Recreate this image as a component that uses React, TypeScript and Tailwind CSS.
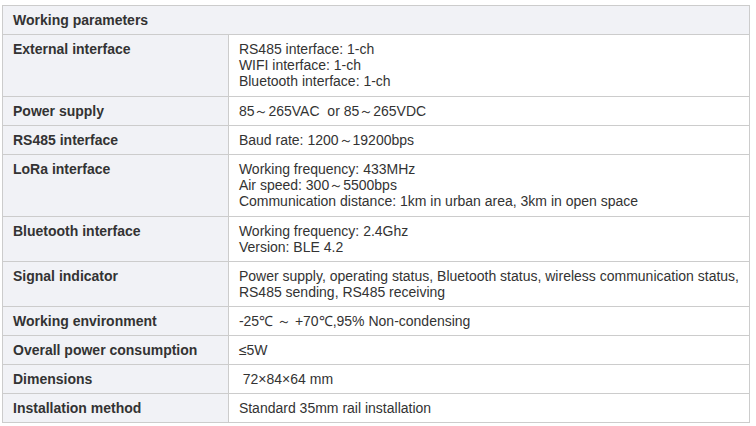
const rows: { label: string; lines: string[] }[] = [
  {
    label: "External interface",
    lines: ["RS485 interface: 1-ch", "WIFI interface: 1-ch", "Bluetooth interface: 1-ch"],
  },
  { label: "Power supply", lines: ["85～265VAC\u00a0 or 85～265VDC"] },
  { label: "RS485 interface", lines: ["Baud rate: 1200～19200bps"] },
  {
    label: "LoRa interface",
    lines: [
      "Working frequency: 433MHz",
      "Air speed: 300～5500bps",
      "Communication distance: 1km in urban area, 3km in open space",
    ],
  },
  { label: "Bluetooth interface", lines: ["Working frequency: 2.4Ghz", "Version: BLE 4.2"] },
  {
    label: "Signal indicator",
    lines: [
      "Power supply, operating status, Bluetooth status, wireless communication status,",
      "RS485 sending, RS485 receiving",
    ],
  },
  { label: "Working environment", lines: ["-25℃ ～ +70℃,95% Non-condensing"] },
  { label: "Overall power consumption", lines: ["≤5W"] },
  { label: "Dimensions", lines: ["\u00a072×84×64 mm"] },
  { label: "Installation method", lines: ["Standard 35mm rail installation"] },
];

export default function App() {
  return (
    <div
      className="min-h-screen bg-white pt-[5px] pl-[2px] text-[14px] text-[#333333]"
      style={{ fontFamily: '"Liberation Sans", Arial, sans-serif' }}
    >
      <table className="w-[748px] border-collapse leading-[16px]">
        <tbody>
          <tr>
            <td
              colSpan={2}
              className="border border-[#cccccc] bg-[#f1f2f6] px-[10px] py-[6px] font-bold"
            >
              Working parameters
            </td>
          </tr>
          {rows.map((r) => (
            <tr key={r.label}>
              <td className="w-[226px] border border-[#cccccc] bg-[#f1f2f6] px-[10px] py-[6px] align-top font-bold">
                {r.label}
              </td>
              <td
                className={
                  r.lines.length > 2
                    ? "border border-[#cccccc] bg-white px-[10px] pt-[6px] pb-[7px] align-top"
                    : "border border-[#cccccc] bg-white px-[10px] py-[6px] align-top"
                }
              >
                {r.lines.map((l, i) => (
                  <div key={i} className="whitespace-nowrap">
                    {l}
                  </div>
                ))}
              </td>
            </tr>
          ))}
        </tbody>
      </table>
    </div>
  );
}
